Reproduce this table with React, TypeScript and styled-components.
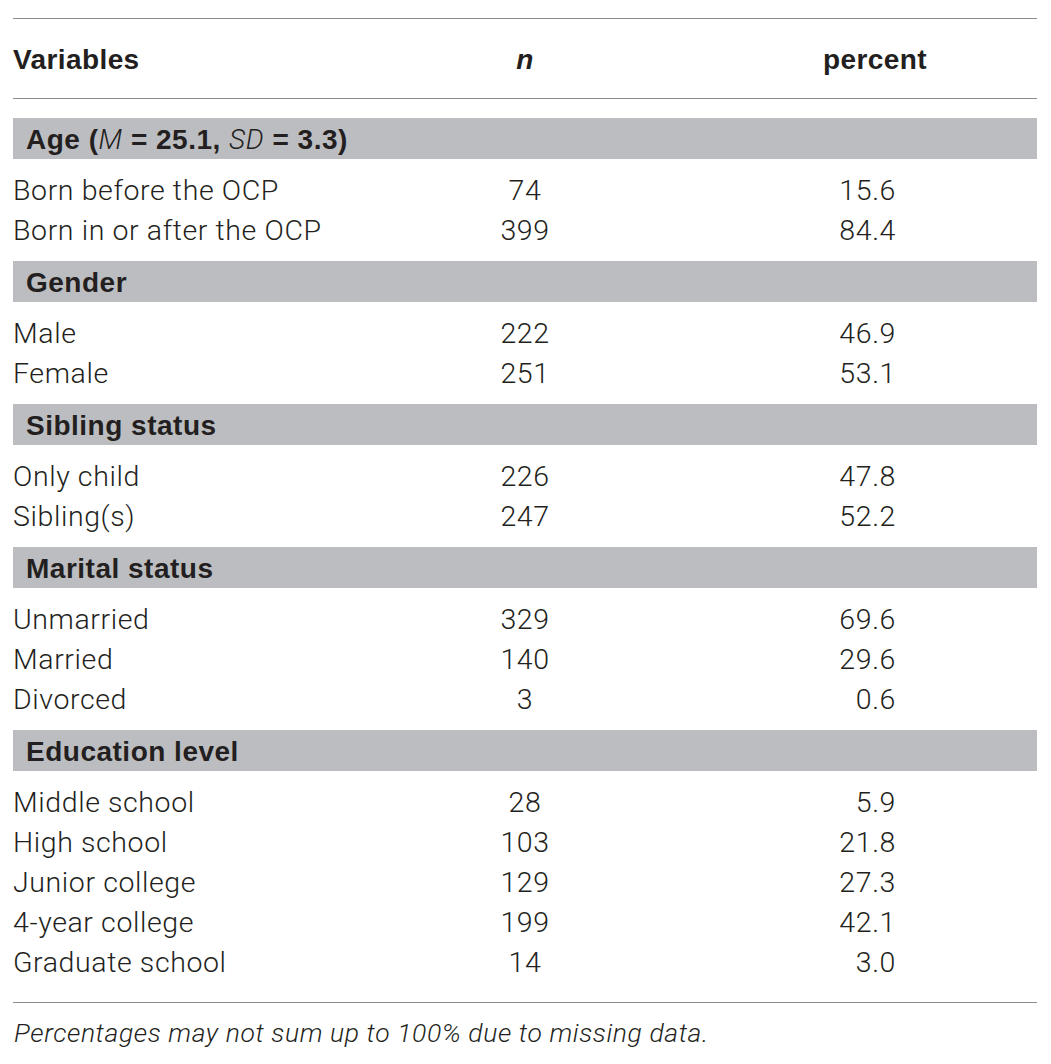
import React from "react";
import styled, { createGlobalStyle } from "styled-components";

const Global = createGlobalStyle`
  html, body { margin: 0; padding: 0; background: #ffffff; }
  body { font-family: "Roboto", "Liberation Sans", Arial, sans-serif; color: #231f20; }
`;

const Page = styled.div`
  padding: 18px 14px 0 13px;
  width: 1024px;
`;

const Rule = styled.div`
  height: 0;
  border-top: 1.5px solid #8d8d8f;
`;

const Grid = styled.div<{ $height: number }>`
  display: grid;
  grid-template-columns: 432px 160px 1fr;
  align-items: center;
  height: ${(p) => p.$height}px;
`;

const HeadCell = styled.div<{ $align?: string; $padRight?: number }>`
  font-family: "Liberation Sans", Arial, sans-serif;
  font-weight: 700;
  font-size: 28px;
  letter-spacing: 0.4px;
  text-align: ${(p) => p.$align ?? "left"};
  padding-right: ${(p) => p.$padRight ?? 0}px;
  line-height: 1;
  padding-top: 3px;
`;

const Band = styled.div`
  background: #bcbdc0;
  height: 41px;
  display: flex;
  align-items: center;
  padding-left: 13px;
  padding-top: 3px;
  box-sizing: border-box;
`;

const BandTitle = styled.span`
  font-family: "Liberation Sans", Arial, sans-serif;
  font-weight: 700;
  font-size: 28px;
  letter-spacing: 0.5px;
  line-height: 1;
  white-space: pre;
`;

const Em = styled.span`
  font-style: italic;
  font-weight: 300;
  font-family: "Roboto", "Liberation Sans", Arial, sans-serif;
  letter-spacing: 0.6px;
`;

const Rows = styled.div`
  padding: 11px 0;
`;

const Cell = styled.div<{ $align?: string; $padRight?: number }>`
  font-size: 28.5px;
  font-weight: 300;
  letter-spacing: 0.6px;
  line-height: 38px;
  padding-top: 2px;
  text-align: ${(p) => p.$align ?? "left"};
  padding-right: ${(p) => p.$padRight ?? 0}px;
  white-space: nowrap;
`;

const Groups = styled.div`
  padding-top: 19px;
  padding-bottom: 9px;
`;

const Note = styled.div`
  font-size: 26.5px;
  font-style: italic;
  font-weight: 300;
  letter-spacing: 0.6px;
  line-height: 30px;
  padding-top: 15px;
  padding-left: 1px;
`;

type Row = [string, string, string];
type Group = { title: React.ReactNode; rows: Row[] };

const groups: Group[] = [
  {
    title: (
      <>
        {"Age ("}
        <Em>M</Em>
        {" = 25.1, "}
        <Em>SD</Em>
        {" = 3.3)"}
      </>
    ),
    rows: [
      ["Born before the OCP", "74", "15.6"],
      ["Born in or after the OCP", "399", "84.4"],
    ],
  },
  {
    title: "Gender",
    rows: [
      ["Male", "222", "46.9"],
      ["Female", "251", "53.1"],
    ],
  },
  {
    title: "Sibling status",
    rows: [
      ["Only child", "226", "47.8"],
      ["Sibling(s)", "247", "52.2"],
    ],
  },
  {
    title: "Marital status",
    rows: [
      ["Unmarried", "329", "69.6"],
      ["Married", "140", "29.6"],
      ["Divorced", "3", "0.6"],
    ],
  },
  {
    title: "Education level",
    rows: [
      ["Middle school", "28", "5.9"],
      ["High school", "103", "21.8"],
      ["Junior college", "129", "27.3"],
      ["4-year college", "199", "42.1"],
      ["Graduate school", "14", "3.0"],
    ],
  },
];

export default function App() {
  return (
    <Page>
      <Global />
      <Rule />
      <Grid $height={79}>
        <HeadCell>Variables</HeadCell>
        <HeadCell $align="center">
          <i>n</i>
        </HeadCell>
        <HeadCell $align="right" $padRight={110}>
          percent
        </HeadCell>
      </Grid>
      <Rule />
      <Groups>
        {groups.map((g, i) => (
          <div key={i}>
            <Band>
              <BandTitle>{g.title}</BandTitle>
            </Band>
            <Rows>
              {g.rows.map((r) => (
                <Grid key={r[0]} $height={40}>
                  <Cell>{r[0]}</Cell>
                  <Cell $align="center">{r[1]}</Cell>
                  <Cell $align="right" $padRight={141}>
                    {r[2]}
                  </Cell>
                </Grid>
              ))}
            </Rows>
          </div>
        ))}
      </Groups>
      <Rule />
      <Note>Percentages may not sum up to 100% due to missing data.</Note>
    </Page>
  );
}
